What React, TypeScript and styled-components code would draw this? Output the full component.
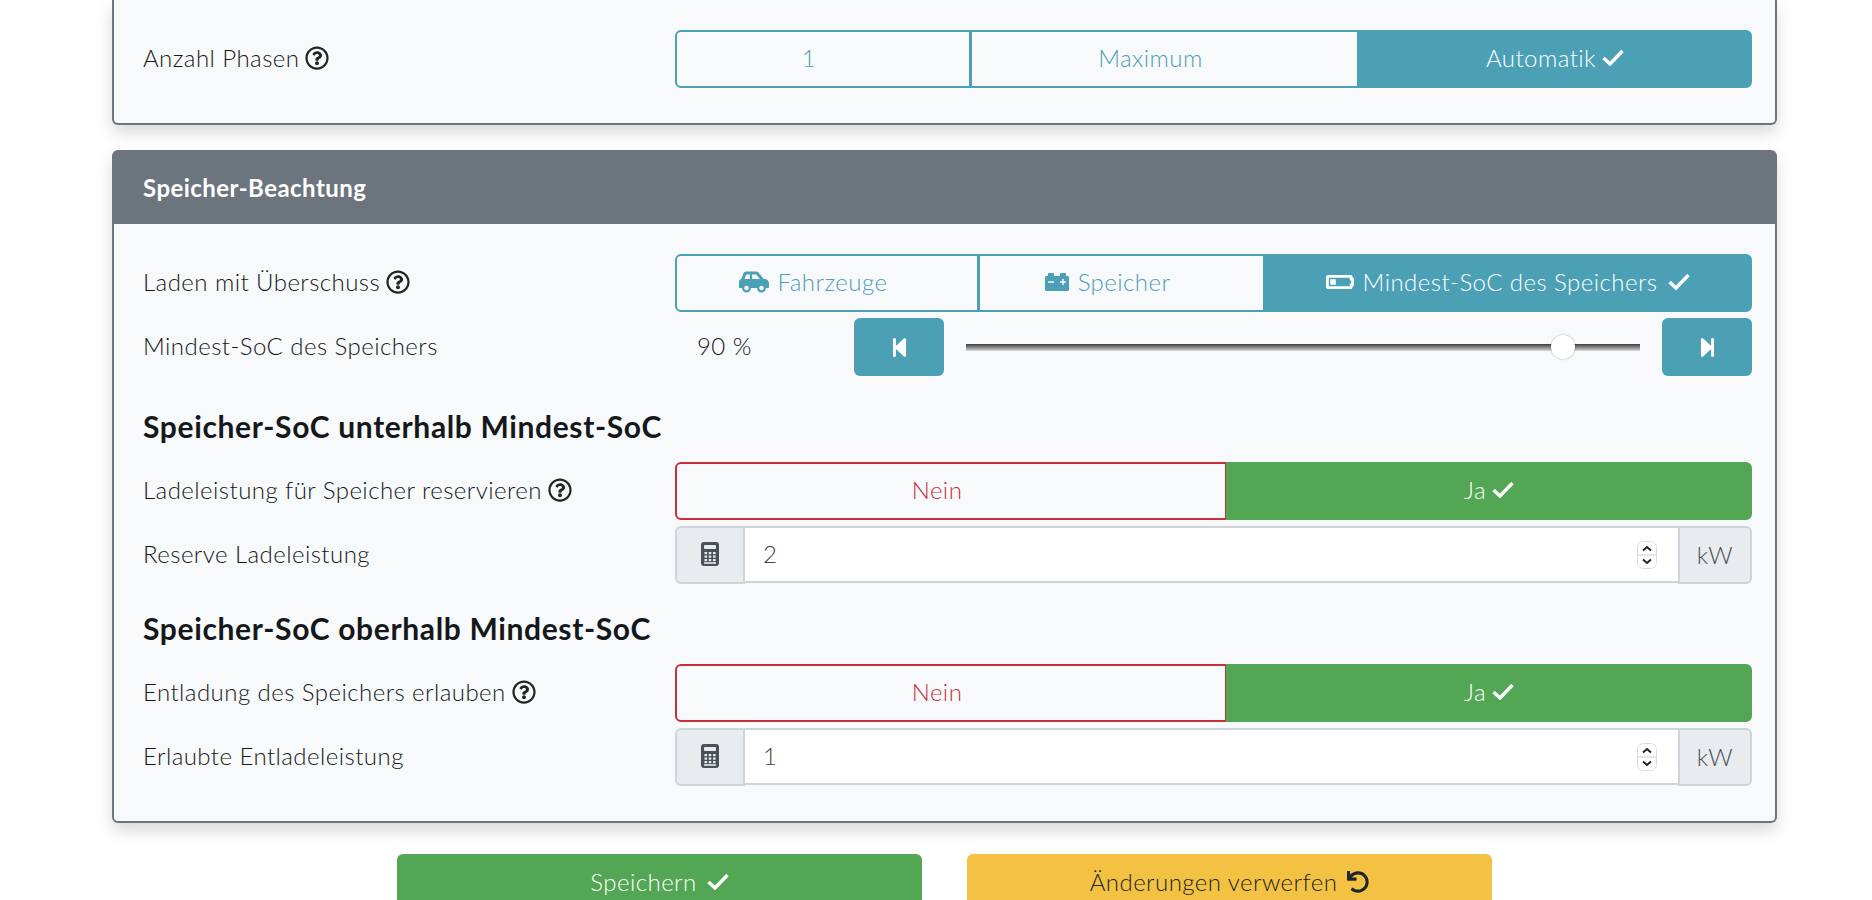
import { createGlobalStyle, styled } from "styled-components";
import { FaCarSide, FaCarBattery, FaUndo, FaStepBackward, FaStepForward, FaBatteryQuarter, FaRegQuestionCircle } from "react-icons/fa";

const GlobalStyle = createGlobalStyle`
  html, body {
    margin: 0;
    height: 900px;
    overflow: hidden;
    background: #fff;
  }
  body {
    font-family: Lato, "Open Sans", sans-serif;
    font-weight: 300;
    font-size: 24px;
    letter-spacing: 0.45px;
    color: #15181b;
  }
`;

const Page = styled.div`
  width: 1665px;
  margin-left: 112px;
  display: flex;
  flex-direction: column;
  gap: 25px;
`;

const Card = styled.section<{ $cut?: boolean }>`
  background: #f8f9fa;
  border: 2px solid #6c757d;
  border-top-width: ${(p) => (p.$cut ? 0 : 2)}px;
  border-radius: ${(p) => (p.$cut ? "0 0 6px 6px" : "6px")};
  box-shadow: 0 8px 16px rgba(0, 0, 0, 0.15);
  padding-bottom: 35px;
`;

const CardHeader = styled.div`
  height: 72px;
  padding: 0 0 2px 29px;
  box-sizing: border-box;
  background: #6c757d;
  color: #fff;
  font-weight: 700;
  display: flex;
  align-items: center;
`;

const CardBody = styled.div`
  padding: 30px 23px 0 29px;
  display: flex;
  flex-direction: column;
  gap: 6px;
`;

const Row = styled.div`
  display: grid;
  grid-template-columns: 532px 1fr;
  align-items: center;
  min-height: 58px;
`;

const Label = styled.div`
  display: flex;
  align-items: center;
  gap: 6px;
  padding-bottom: 3px;
`;

const Help = styled(FaRegQuestionCircle)`
  font-size: 24px;
  color: #212529;
`;

const Segments = styled.div<{ $columns: string }>`
  display: grid;
  grid-template-columns: ${(p) => p.$columns};
  height: 58px;
`;

const Segment = styled.div<{ $color: string; $active?: boolean }>`
  display: flex;
  align-items: center;
  justify-content: center;
  gap: 6px;
  padding-bottom: 3px;
  box-sizing: border-box;
  border: 2px solid ${(p) => p.$color};
  margin-left: -1px;
  background: ${(p) => (p.$active ? p.$color : "transparent")};
  color: ${(p) => (p.$active ? "#fff" : p.$color)};

  &:first-child {
    margin-left: 0;
    border-radius: 6px 0 0 6px;
  }
  &:last-child {
    border-radius: 0 6px 6px 0;
  }
`;

const SegmentIcon = styled.span<{ $size: number }>`
  display: flex;
  font-size: ${(p) => p.$size}px;
  margin-right: 3px;
`;

const Check = styled.svg<{ $hidden?: boolean; $spaced?: boolean }>`
  width: 22px;
  height: 17px;
  flex: none;
  margin-left: ${(p) => (p.$spaced ? 5 : 0)}px;
  visibility: ${(p) => (p.$hidden ? "hidden" : "visible")};
`;

const SliderControl = styled.div`
  display: grid;
  grid-template-columns: 179px 90px 1fr 90px;
  align-items: center;
`;

const SliderValue = styled.div`
  padding: 0 0 3px 22px;
`;

const StepButton = styled.div`
  height: 58px;
  border-radius: 6px;
  background: #4ca0b6;
  color: #fff;
  display: flex;
  align-items: center;
  justify-content: center;
  font-size: 21px;
`;

const Track = styled.div`
  position: relative;
  height: 7px;
  margin: 0 22px;
  background: linear-gradient(#3b3b3b, #d8d8d8);
`;

const Thumb = styled.div`
  position: absolute;
  top: 50%;
  width: 24px;
  height: 24px;
  margin: -12px 0 0 -12px;
  border-radius: 50%;
  background: #fff;
  box-shadow: 0 0 2px rgba(0, 0, 0, 0.35);
`;

const Heading = styled.h3<{ $height: number }>`
  margin: 0;
  height: ${(p) => p.$height}px;
  padding-bottom: 12px;
  box-sizing: border-box;
  display: flex;
  align-items: flex-end;
  line-height: 36px;
  font-size: 30px;
  letter-spacing: 0.64px;
  font-weight: 700;
`;

const InputGroup = styled.div`
  display: grid;
  grid-template-columns: 70px 1fr 74px;
  height: 58px;
`;

const Addon = styled.div<{ $side: "left" | "right" }>`
  display: flex;
  align-items: center;
  justify-content: center;
  background: #e9ecef;
  border: 2px solid #ced4da;
  color: #495057;
  padding-bottom: 2px;
  box-sizing: border-box;
  border-radius: ${(p) => (p.$side === "left" ? "6px 0 0 6px" : "0 6px 6px 0")};
`;

const NumberField = styled.div`
  position: relative;
  height: 57px;
  display: flex;
  align-items: center;
  padding: 0 0 3px 18px;
  background: #fff;
  border-top: 2px solid #ced4da;
  border-bottom: 2px solid #ced4da;
  box-sizing: border-box;
  color: #3d4349;
`;

const Spinner = styled.svg`
  position: absolute;
  right: 21px;
  top: 13px;
`;

const Actions = styled.div`
  display: flex;
  justify-content: center;
  gap: 45px;
  margin-top: 6px;
`;

const ActionButton = styled.div<{ $bg: string; $fg: string }>`
  width: 525px;
  height: 58px;
  padding-bottom: 3px;
  box-sizing: border-box;
  border-radius: 6px;
  background: ${(p) => p.$bg};
  color: ${(p) => p.$fg};
  display: flex;
  align-items: center;
  justify-content: center;
  gap: 10px;
  svg {
    font-size: 22px;
  }
`;

const teal = "#4ca0b6";
const red = "#c6303e";
const green = "#53a653";

const CheckMark = ({ hidden, spaced }: { hidden?: boolean; spaced?: boolean }) => (
  <Check $hidden={hidden} $spaced={spaced} viewBox="0 0 22 17">
    <path d="M1.5 9l6.5 6L20.5 2" fill="none" stroke="currentColor" strokeWidth="3.4" />
  </Check>
);

const CalculatorIcon = () => (
  <svg width="18" height="24" viewBox="0 0 18 24">
    <rect width="18" height="24" rx="3" fill="#495057" />
    <rect x="3" y="3" width="12" height="4" rx="1" fill="#e9ecef" />
    {[10, 13.5, 17].map((y) =>
      [3.5, 7.7, 12].map((x) => <rect key={`${x}-${y}`} x={x} y={y} width="2.6" height="2.2" fill="#e9ecef" />)
    )}
    <rect x="3" y="20.2" width="12" height="1.6" fill="#e9ecef" />
  </svg>
);

const StepInput = () => (
  <Spinner width="20" height="28" viewBox="0 0 20 28">
    <rect x="0.5" y="0.5" width="19" height="27" rx="6" fill="#fff" stroke="#dcdcdc" />
    <line x1="1" y1="14" x2="19" y2="14" stroke="#cfcfcf" />
    <path d="M6 9.5 10 6l4 3.5M6 18.5 10 22l4-3.5" fill="none" stroke="#222" strokeWidth="2" />
  </Spinner>
);

const YesNo = () => (
  <Segments $columns="552px 1fr">
    <Segment $color={red}>
      Nein <CheckMark hidden />
    </Segment>
    <Segment $color={green} $active>
      Ja <CheckMark />
    </Segment>
  </Segments>
);

const KwInput = ({ value }: { value: string }) => (
  <InputGroup>
    <Addon $side="left">
      <CalculatorIcon />
    </Addon>
    <NumberField>
      {value}
      <StepInput />
    </NumberField>
    <Addon $side="right">kW</Addon>
  </InputGroup>
);

const App = () => {
  return (
    <Page>
      <GlobalStyle />
      <Card $cut>
        <CardBody>
          <Row>
            <Label>
              Anzahl Phasen <Help />
            </Label>
            <Segments $columns="296px 388px 1fr">
              <Segment $color={teal}>
                1 <CheckMark hidden />
              </Segment>
              <Segment $color={teal}>
                Maximum <CheckMark hidden />
              </Segment>
              <Segment $color={teal} $active>
                Automatik <CheckMark />
              </Segment>
            </Segments>
          </Row>
        </CardBody>
      </Card>
      <Card>
        <CardHeader>Speicher-Beachtung</CardHeader>
        <CardBody>
          <Row>
            <Label>
              Laden mit Überschuss <Help />
            </Label>
            <Segments $columns="304px 286px 1fr">
              <Segment $color={teal}>
                <SegmentIcon $size={30}>
                  <FaCarSide />
                </SegmentIcon>
                Fahrzeuge <CheckMark hidden />
              </Segment>
              <Segment $color={teal}>
                <SegmentIcon $size={24}>
                  <FaCarBattery />
                </SegmentIcon>
                Speicher <CheckMark hidden />
              </Segment>
              <Segment $color={teal} $active>
                <SegmentIcon $size={28}>
                  <FaBatteryQuarter />
                </SegmentIcon>
                Mindest-SoC des Speichers <CheckMark spaced />
              </Segment>
            </Segments>
          </Row>
          <Row>
            <Label>Mindest-SoC des Speichers</Label>
            <SliderControl>
              <SliderValue>90 %</SliderValue>
              <StepButton>
                <FaStepBackward />
              </StepButton>
              <Track>
                <Thumb style={{ left: `${((1563 - 966) / 674) * 100}%` }} />
              </Track>
              <StepButton>
                <FaStepForward />
              </StepButton>
            </SliderControl>
          </Row>
          <Heading $height={74}>Speicher-SoC unterhalb Mindest-SoC</Heading>
          <Row>
            <Label>
              Ladeleistung für Speicher reservieren <Help />
            </Label>
            <YesNo />
          </Row>
          <Row>
            <Label>Reserve Ladeleistung</Label>
            <KwInput value="2" />
          </Row>
          <Heading $height={68}>Speicher-SoC oberhalb Mindest-SoC</Heading>
          <Row>
            <Label>
              Entladung des Speichers erlauben <Help />
            </Label>
            <YesNo />
          </Row>
          <Row>
            <Label>Erlaubte Entladeleistung</Label>
            <KwInput value="1" />
          </Row>
        </CardBody>
      </Card>
      <Actions>
        <ActionButton $bg={green} $fg="#fff">
          Speichern <CheckMark />
        </ActionButton>
        <ActionButton $bg="#f4c242" $fg="#212529">
          Änderungen verwerfen <FaUndo />
        </ActionButton>
      </Actions>
    </Page>
  );
};

export default App;
